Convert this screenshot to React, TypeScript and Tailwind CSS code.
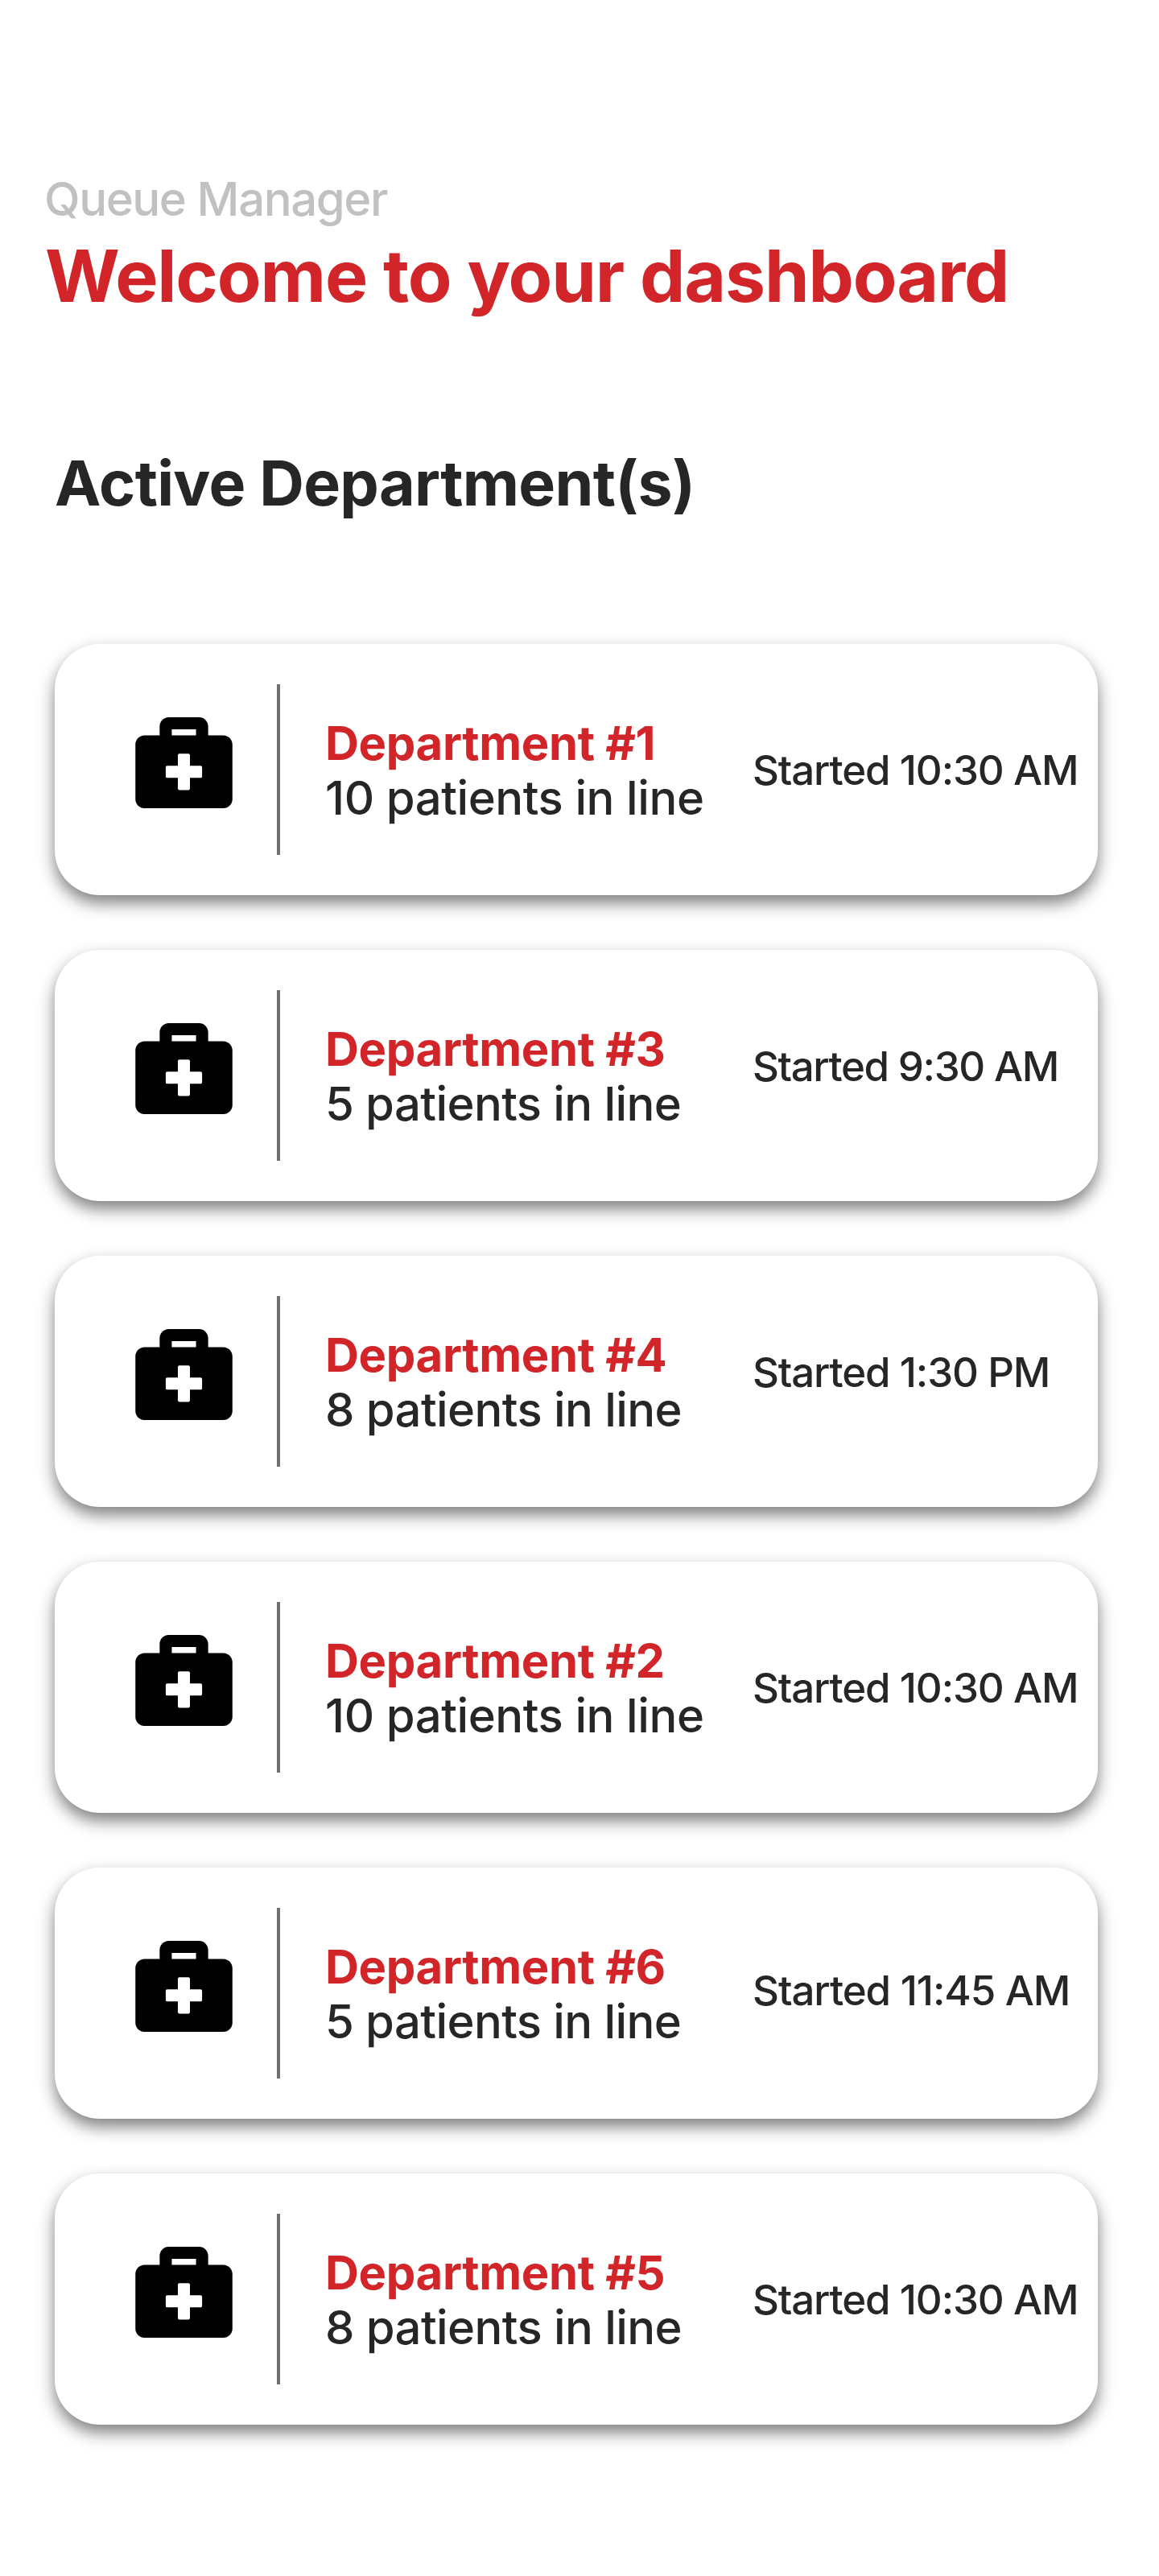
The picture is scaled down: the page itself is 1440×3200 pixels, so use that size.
type Department = {
  name: string;
  patients: string;
  patientsTracking: string;
  started: string;
  startedStyle: string;
};

const departments: Department[] = [
  { name: "Department #1", patients: "10 patients in line", patientsTracking: "tracking-[-0.43px]", started: "Started 10:30 AM", startedStyle: "mt-[127px] tracking-[-1.15px]" },
  { name: "Department #3", patients: "5 patients in line", patientsTracking: "tracking-[-0.6px]", started: "Started 9:30 AM", startedStyle: "mt-[115px] tracking-[-1.4px]" },
  { name: "Department #4", patients: "8 patients in line", patientsTracking: "tracking-[-0.6px]", started: "Started 1:30 PM", startedStyle: "mt-[115px] tracking-[-1.15px]" },
  { name: "Department #2", patients: "10 patients in line", patientsTracking: "tracking-[-0.43px]", started: "Started 10:30 AM", startedStyle: "mt-[127px] tracking-[-1.15px]" },
  { name: "Department #6", patients: "5 patients in line", patientsTracking: "tracking-[-0.6px]", started: "Started 11:45 AM", startedStyle: "mt-[123px] tracking-[-1.05px]" },
  { name: "Department #5", patients: "8 patients in line", patientsTracking: "tracking-[-0.6px]", started: "Started 10:30 AM", startedStyle: "mt-[127px] tracking-[-1.15px]" },
];

function MedicalBag() {
  return (
    <svg viewBox="0 32 512 480" className="mt-[91px] ml-[100px] h-[113px] w-[121px] shrink-0" fill="#000">
      <path d="M464 128h-80V80c0-26.5-21.5-48-48-48H176c-26.5 0-48 21.5-48 48v48H48c-26.5 0-48 21.5-48 48v288c0 26.5 21.5 48 48 48h416c26.5 0 48-21.5 48-48V176c0-26.5-21.5-48-48-48zM192 96h128v32H192V96zm160 248c0 4.4-3.6 8-8 8h-56v56c0 4.4-3.6 8-8 8h-48c-4.4 0-8-3.6-8-8v-56h-56c-4.4 0-8-3.6-8-8v-48c0-4.4 3.6-8 8-8h56v-56c0-4.4 3.6-8 8-8h48c4.4 0 8 3.6 8 8v56h56c4.4 0 8 3.6 8 8v48z" />
    </svg>
  );
}

function DepartmentCard({ name, patients, patientsTracking, started, startedStyle }: Department) {
  return (
    <li className="flex h-[312px] items-start rounded-[56px] bg-white shadow-[0_10px_20px_rgba(0,0,0,0.5)]">
      <MedicalBag />
      <div className="mt-[50px] ml-[55px] h-[212px] w-1 shrink-0 bg-[#6f6f6f]" />
      <div className="mt-[89px] ml-[56px] w-[531px] shrink-0 text-[58px] leading-[68px] whitespace-nowrap">
        <h3 className="font-bold tracking-[-0.33px] text-[#d12529]">{name}</h3>
        <p className={`${patientsTracking} font-medium`}>{patients}</p>
      </div>
      <p className={`${startedStyle} text-[51px] leading-[60px] font-medium whitespace-nowrap`}>{started}</p>
    </li>
  );
}

export default function App() {
  return (
    <main className="flex h-[3200px] w-[1440px] flex-col bg-white pt-[213px] font-['Inter',sans-serif] text-[#262626]">
      <header className="pl-[55px] whitespace-nowrap">
        <p className="text-[58px] leading-[68px] font-medium tracking-[-1.39px] text-[#c1c1c1]">Queue Manager</p>
        <h1 className="mt-[8px] ml-px text-[89.4px] leading-[108px] font-bold tracking-[-1.14px] text-[#d12529]">
          Welcome to your dashboard
        </h1>
      </header>
      <section className="mt-[157px] pr-[76px] pl-[68px]">
        <h2 className="text-[77px] leading-[92px] font-bold tracking-[-0.68px]">Active Department(s)</h2>
        <ul className="mt-[154px] flex flex-col gap-[68px]">
          {departments.map((d) => (
            <DepartmentCard key={d.name} {...d} />
          ))}
        </ul>
      </section>
    </main>
  );
}
